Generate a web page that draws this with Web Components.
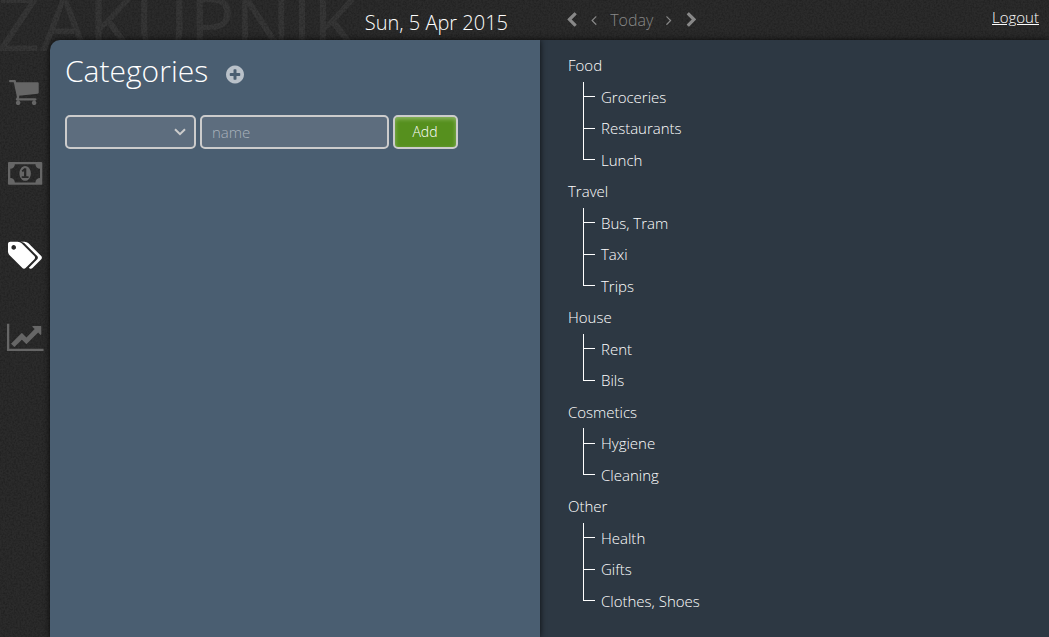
<!DOCTYPE html>
<html lang="en">
<head>
<meta charset="utf-8">
<title>Zakupnik</title>
<style>
html,body{margin:0;height:100%;overflow:hidden;background:#282828}
body{font:300 15px/22.5px "Open Sans",sans-serif;color:#fff}
</style>
</head>
<body>
<zak-app></zak-app>
<script>
const define=(name,html)=>customElements.define(name,class extends HTMLElement{
  connectedCallback(){
    if(this.shadowRoot)return;
    const root=this.attachShadow({mode:'open'});
    root.innerHTML=typeof html==='function'?html(this):html;
  }
});

/* name: [x offset, advance width, path] on a 1792-unit em */
const ICONS={
cart:[64,1664,'M704 1536q0 52-38 90t-90 38-90-38-38-90 38-90 90-38 90 38 38 90zm896 0q0 52-38 90t-90 38-90-38-38-90 38-90 90-38 90 38 38 90zm128-1088v512q0 24-16.500 42.500t-40.500 21.500l-1044 122q13 60 13 70 0 16-24 64h920q26 0 45 19t19 45-19 45-45 19h-1024q-26 0-45-19t-19-45q0-11 8-31.500t16-36 21.500-40 15.500-29.500l-177-823h-204q-26 0-45-19t-19-45 19-45 45-19h256q16 0 28.500 6.500t19.500 15.500 13 24.500 8 26 5.500 29.500 4.500 26h1201q26 0 45 19t19 45z'],
money:[-64,1920,'M704 1152h384v-96h-128v-448h-114l-148 137 77 80q42-37 55-57h2v288h-128v96zm512-256q0 70-21 142t-59.500 134-101.500 101-138 39-138-39-101.500-101-59.500-134-21-142 21-142 59.500-134 101.500-101 138-39 138 39 101.500 101 59.500 134 21 142zm512 256v-512q-106 0-181-75t-75-181h-1152q0 106-75 181t-181 75v512q106 0 181 75t75 181h1152q0-106 75-181t181-75zm128-832v1152q0 26-19 45t-45 19h-1792q-26 0-45-19t-19-45v-1152q0-26 19-45t45-19h1792q26 0 45 19t19 45z'],
tags:[-64,1920,'M384 448q0-53-37.500-90.500t-90.500-37.500-90.500 37.500-37.500 90.500 37.500 90.500 90.500 37.500 90.500-37.500 37.500-90.500zm1067 576q0 53-37 90l-491 492q-39 37-91 37-53 0-90-37l-715-716q-38-37-64.500-101t-26.500-117v-416q0-52 38-90t90-38h416q53 0 117 26.500t102 64.500l715 714q37 39 37 91zm384 0q0 53-37 90l-491 492q-39 37-91 37-36 0-59-14t-53-45l470-470q37-37 37-90 0-52-37-91l-715-714q-38-38-102-64.500t-117-26.500h224q53 0 117 26.500t102 64.500l715 714q37 39 37 91z'],
chart:[0,2048,'M2048 1536v128h-2048v-1536h128v1408h1920zm-128-1248v435q0 21-19.500 29.500t-35.500-7.500l-121-121-633 633q-10 10-23 10t-23-10l-233-233-416 416-192-192 585-585q10-10 23-10t23 10l233 233 464-464-121-121q-16-16-7.500-35.500t29.500-19.500h435q14 0 23 9t9 22z'],
plus:[128,1536,'M1344 960v-128q0-26-19-45t-45-19h-256v-256q0-26-19-45t-45-19h-128q-26 0-45 19t-19 45v256h-256q-26 0-45 19t-19 45v128q0 26 19 45t45 19h256v256q0 26 19 45t45 19h128q26 0 45-19t19-45v-256h256q26 0 45-19t19-45zm320-64q0 209-103 385.500t-279.500 279.500-385.500 103-385.500-103-279.500-279.500-103-385.500 103-385.500 279.500-279.500 385.500-103 385.500 103 279.500 279.500 103 385.500z'],
prev:[256,1280,'M1427 301l-531 531 531 531q19 19 19 45t-19 45l-166 166q-19 19-45 19t-45-19l-742-742q-19-19-19-45t19-45l742-742q19-19 45-19t45 19l166 166q19 19 19 45t-19 45z'],
next:[256,1280,'M1363 877l-742 742q-19 19-45 19t-45-19l-166-166q-19-19-19-45t19-45l531-531-531-531q-19-19-19-45t19-45l166-166q19-19 45-19t45 19l742 742q19 19 19 45t-19 45z'],
left:[576,640,'M1203 544q0 13-10 23l-393 393 393 393q10 10 10 23t-10 23l-50 50q-10 10-23 10t-23-10l-466-466q-10-10-10-23t10-23l466-466q10-10 23-10t23 10l50 50q10 10 10 23z'],
right:[576,640,'M1171 960q0 13-10 23l-466 466q-10 10-23 10t-23-10l-50-50q-10-10-10-23t10-23l393-393-393-393q-10-10-10-23t10-23l50-50q10-10 23-10t23 10l466 466q10 10 10 23z']
};
define('zak-icon',el=>{
  const [x,w,d]=ICONS[el.getAttribute('name')],s=+el.getAttribute('size');
  return `<style>:host{display:block;flex:none}svg{display:block;overflow:visible}</style>
  <svg width="${w*s/1792}" height="${s}" viewBox="${x} 0 ${w} 1792" fill="currentColor"><path d="${d}"/></svg>`;
});

define('zak-backdrop',`<style>
:host{position:absolute;inset:0;overflow:hidden;background:#2b2b2b}
svg{position:absolute;inset:0}
.brand{position:absolute;left:-3px;top:-30px;font-size:75.5px;font-weight:400;line-height:103px;color:#363636;white-space:nowrap}
</style>
<span class="brand">ZAKUPNIK</span>
<svg width="100%" height="100%"><filter id="grain" x="0" y="0" width="100%" height="100%"><feTurbulence type="fractalNoise" baseFrequency=".55" numOctaves="2" seed="4"/><feColorMatrix values="0 0 0 0 0  0 0 0 0 0  0 0 0 0 0  .9 0 0 0 -.34"/></filter><rect width="100%" height="100%" filter="url(#grain)" opacity=".55"/></svg>`);

define('zak-header',`<style>
:host{display:flex;height:40px;position:relative;align-items:flex-start}
.date{width:508px;text-align:right;font-size:20px;line-height:28px;padding-top:9px;box-sizing:border-box}
nav{display:flex;align-items:center;height:40px;margin-left:58px;color:#888;font-size:16px}
.today{margin:0 13px}
.s1{margin-right:14px}.s2{margin-left:14px}
.logout{margin-left:auto;padding:6px 10px 0 0;color:#fff;text-decoration:none}
.logout span{text-decoration:underline}
</style>
<div class="date">Sun, 5 Apr 2015</div>
<nav><zak-icon class="s1" name="prev" size="16"></zak-icon><zak-icon name="left" size="16"></zak-icon><span class="today">Today</span><zak-icon name="right" size="16"></zak-icon><zak-icon class="s2" name="next" size="16"></zak-icon></nav>
<a class="logout"><span>Logout</span></a>`);

define('zak-sidebar',`<style>
:host{display:flex;flex-direction:column;align-items:center;gap:50px;width:50px;flex:none;padding-top:35px;color:#666;box-sizing:border-box}
zak-icon{transform:translateY(.4px)}
.cart{margin-right:1.5px}
.on{color:#fff}
</style>
<zak-icon class="cart" name="cart" size="32"></zak-icon><zak-icon name="money" size="32"></zak-icon><zak-icon class="on" name="tags" size="32"></zak-icon><zak-icon name="chart" size="32"></zak-icon>`);

define('zak-form',`<style>
:host{display:flex;gap:4px}
.f{box-sizing:border-box;height:34px;border:2px solid #ccc;border-radius:5px;background:#5d6d7e;font:inherit;display:flex;align-items:center}
.sel{width:131px;justify-content:flex-end;padding-right:8px}
.name{width:189px;padding:0 10px;color:#a9b2bc;outline:0}
.name::placeholder{color:#a9b2bc;opacity:1}
.add{width:65px;justify-content:center;background:#56901e;color:#fff;font-size:14px;padding:0 1px 0 0;box-shadow:inset 0 2px 4px #8fb666}
</style>
<div class="f sel"><svg width="12" height="8" fill="none" stroke="#ccc" stroke-width="2"><path d="M1 1.200l5 5 5-5"/></svg></div>
<input class="f name" placeholder="name"><button class="f add">Add</button>`);

define('zak-panel',`<style>
:host{display:block;width:490px;flex:none;box-sizing:border-box;padding:15px;background:#4a5e71;border-radius:10px 0 0 0;box-shadow:0 0 6px #000c;position:relative;z-index:1}
.top{display:flex;margin-bottom:25px;height:35px}
h1{font-size:30px;line-height:32px;font-weight:300;margin:0 18px 0 0}
.top zak-icon{color:#b9c1c9;padding-top:8.500px}
</style>
<div class="top"><h1>Categories</h1><zak-icon name="plus" size="21"></zak-icon></div><zak-form></zak-form>`);

define('zak-category',el=>`<style>
:host{display:block;line-height:31.5px}
ul{list-style:none;margin:0;padding:0 0 0 15px}
li{padding-left:18px;height:31.5px;position:relative}
li::before{content:"";position:absolute;left:0;top:0;width:11px;height:14.500px;border-left:1px solid #fff;border-bottom:1px solid #fff}
li:not(:last-child)::after{content:"";position:absolute;left:0;top:0;height:32px;border-left:1px solid #fff}
</style><slot></slot><ul>${el.getAttribute('items').split('|').map(i=>`<li>${i}</li>`).join('')}</ul>`);

define('zak-tree',`<style>
:host{display:block;flex:1;background:#2d3843;padding:10px 28px;box-shadow:0 0 6px #000c}
</style>
<zak-category items="Groceries|Restaurants|Lunch">Food</zak-category>
<zak-category items="Bus, Tram|Taxi|Trips">Travel</zak-category>
<zak-category items="Rent|Bils">House</zak-category>
<zak-category items="Hygiene|Cleaning">Cosmetics</zak-category>
<zak-category items="Health|Gifts|Clothes, Shoes">Other</zak-category>`);

define('zak-app',`<style>
:host{display:flex;flex-direction:column;position:relative;height:100vh;overflow:hidden}
main{display:flex;flex:1;min-height:0;position:relative}
</style><zak-backdrop></zak-backdrop><zak-header></zak-header><main><zak-sidebar></zak-sidebar><zak-panel></zak-panel><zak-tree></zak-tree></main>`);
</script>
</body>
</html>
